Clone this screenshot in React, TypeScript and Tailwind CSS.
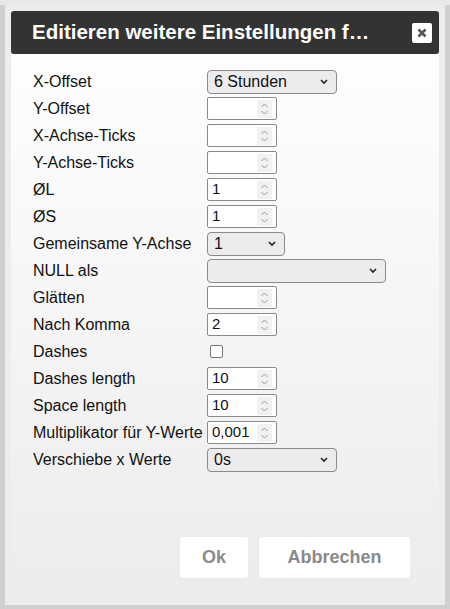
import React from 'react';

type Row =
  | { label: string; kind: 'select'; value: string; w: string }
  | { label: string; kind: 'number'; value: string }
  | { label: string; kind: 'check' };

const rows: Row[] = [
  { label: 'X-Offset', kind: 'select', value: '6 Stunden', w: 'w-[130px]' },
  { label: 'Y-Offset', kind: 'number', value: '' },
  { label: 'X-Achse-Ticks', kind: 'number', value: '' },
  { label: 'Y-Achse-Ticks', kind: 'number', value: '' },
  { label: 'ØL', kind: 'number', value: '1' },
  { label: 'ØS', kind: 'number', value: '1' },
  { label: 'Gemeinsame Y-Achse', kind: 'select', value: '1', w: 'w-[78px]' },
  { label: 'NULL als', kind: 'select', value: '', w: 'w-[179px]' },
  { label: 'Glätten', kind: 'number', value: '' },
  { label: 'Nach Komma', kind: 'number', value: '2' },
  { label: 'Dashes', kind: 'check' },
  { label: 'Dashes length', kind: 'number', value: '10' },
  { label: 'Space length', kind: 'number', value: '10' },
  { label: 'Multiplikator für Y-Werte', kind: 'number', value: '0,001' },
  { label: 'Verschiebe x Werte', kind: 'select', value: '0s', w: 'w-[130px]' },
];

function Chevron() {
  return (
    <svg width="10" height="7" viewBox="0 0 10 7" className="shrink-0">
      <path d="M2 2 L5 5 L8 2" fill="none" stroke="#222" strokeWidth="1.6" />
    </svg>
  );
}

function Spinner() {
  return (
    <span className="flex h-[18px] w-[15px] items-center justify-center bg-[#f1f1f1]">
      <svg width="9" height="14" viewBox="0 0 9 14">
        <path d="M1.5 5 L4.5 2 L7.5 5" fill="none" stroke="#9a9a9a" strokeWidth="1" />
        <path d="M1.5 9 L4.5 12 L7.5 9" fill="none" stroke="#9a9a9a" strokeWidth="1" />
      </svg>
    </span>
  );
}

function Field({ row }: { row: Row }) {
  if (row.kind === 'select') {
    return (
      <div className={`${row.w} flex h-[24px] items-center justify-between rounded-[4px] border border-[#8a8a8a] bg-[#ececef] pl-[6px] pr-[7px] text-[16px] text-[#111]`}>
        <span>{row.value}</span>
        <Chevron />
      </div>
    );
  }
  if (row.kind === 'check') {
    return <div className="ml-[3px] h-[13px] w-[13px] rounded-[2px] border border-[#767676] bg-white" />;
  }
  return (
    <div className="flex h-[23px] w-[70px] items-center justify-between rounded-[2px] border border-[#8a8a8a] bg-white pl-[4px] pr-[4px] text-[15px] text-[#111]">
      <span>{row.value}</span>
      <Spinner />
    </div>
  );
}

export default function App() {
  return (
    <div className="h-[609px] w-[450px] bg-[#cfd1d1] font-['Liberation_Sans',Arial,sans-serif]">
      <div className="h-[5px] bg-[#e8e8e8]" />
      <div className="ml-[5px] flex h-[600px] w-[440px] flex-col bg-[#ececec] p-[6px]">
        {/* Title bar */}
        <div className="flex h-[43px] items-center justify-between rounded-[3px] bg-[#333333] pl-[21px] pr-[7px]">
          <span className="text-[20.5px] font-bold text-white">Editieren weitere Einstellungen f…</span>
          <button className="flex h-[20px] w-[20px] items-center justify-center rounded-[2px] bg-white">
            <svg width="10" height="10" viewBox="0 0 10 10">
              <path d="M1.5 1.5 L8.5 8.5 M8.5 1.5 L1.5 8.5" stroke="#555" strokeWidth="2.6" />
            </svg>
          </button>
        </div>

        {/* Body */}
        <div className="flex flex-1 flex-col bg-gradient-to-b from-[#fefefe] to-[#ececec] pl-[22px] pt-[14px]">
          <div className="grid grid-cols-[174px_1fr]">
            {rows.map((r) => (
              <React.Fragment key={r.label}>
                <div className="flex h-[27px] items-center text-[16px] text-[#111]">{r.label}</div>
                <div className="flex h-[27px] items-center">
                  <Field row={r} />
                </div>
              </React.Fragment>
            ))}
          </div>

          <div className="mt-auto mb-[21px] flex justify-end gap-[11px] pr-[29px]">
            <button className="h-[41px] w-[68px] rounded-[2px] bg-white text-[18px] font-bold text-[#8a8a8a] shadow-[0_0_1px_rgba(0,0,0,0.15)]">
              Ok
            </button>
            <button className="h-[41px] w-[151px] rounded-[2px] bg-white text-[18px] font-bold text-[#8a8a8a] shadow-[0_0_1px_rgba(0,0,0,0.15)]">
              Abbrechen
            </button>
          </div>
        </div>
      </div>
    </div>
  );
}
